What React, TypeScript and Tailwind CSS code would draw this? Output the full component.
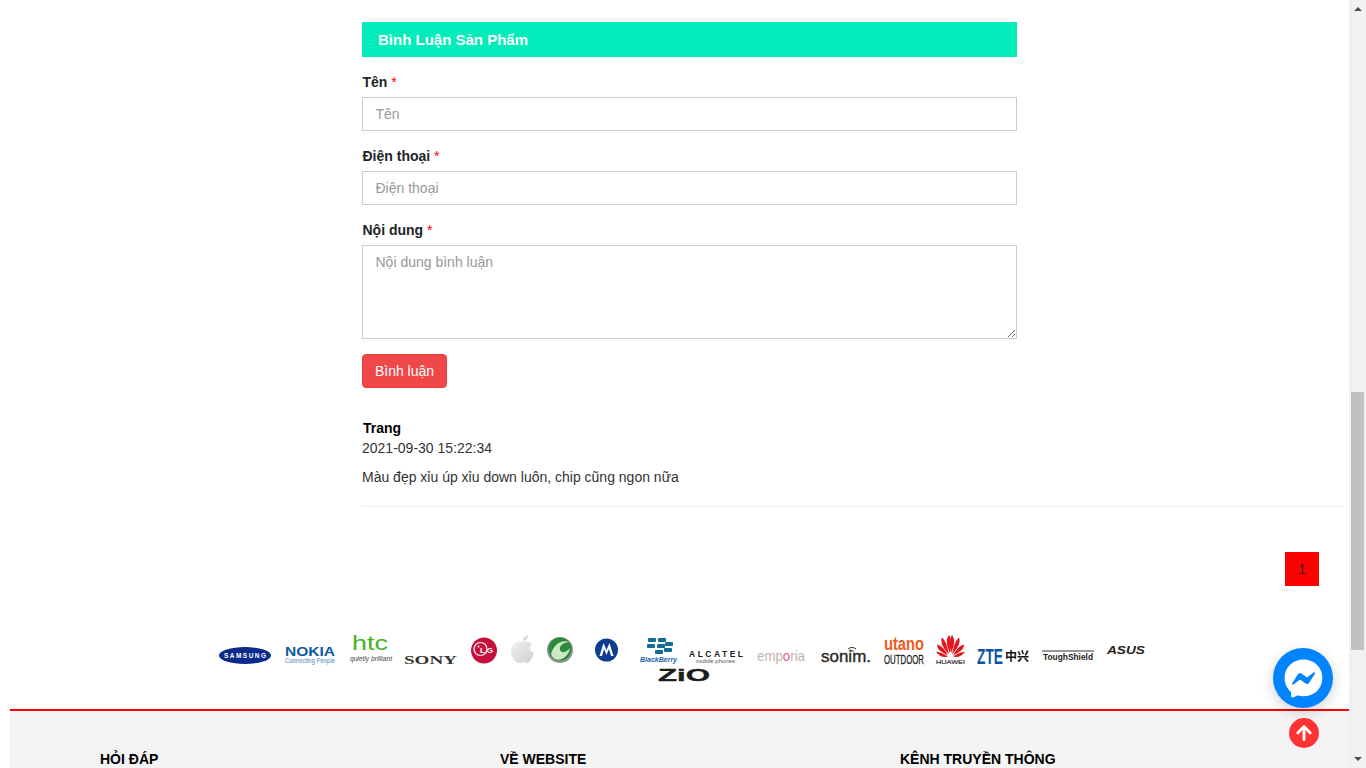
import React from "react";
import { FaArrowUp, FaFacebookMessenger } from "react-icons/fa";

const sans = { fontFamily: '"Liberation Sans", Arial, sans-serif' };

function Logo({ w, ml = 13, children }: { w: number; ml?: number; children: React.ReactNode }) {
  return (
    <svg width={w} height={36} viewBox={`0 0 ${w} 36`} style={{ marginLeft: ml, ...sans }} className="shrink-0 block overflow-visible">
      {children}
    </svg>
  );
}

function Logos() {
  return (
    <div className="pl-[219px] w-[1349px] h-[54px] flex flex-col">
      <div className="flex h-[36px]">
        <Logo w={52} ml={0}>
          <ellipse cx="26" cy="23.5" rx="26" ry="8.5" fill="#0a2a8c" />
          <text x="26" y="26" fontSize="6.5" fontWeight="700" fill="#fff" textAnchor="middle" textLength="42">SAMSUNG</text>
        </Logo>
        <Logo w={50} ml={14}>
          <text x="0" y="24" fontSize="12.5" fontWeight="700" fill="#0d5a9c" textLength="50" lengthAdjust="spacingAndGlyphs">NOKIA</text>
          <text x="0" y="30.500" fontSize="8" fill="#4a86c0" textLength="50" lengthAdjust="spacingAndGlyphs">Connecting People</text>
        </Logo>
        <Logo w={42} ml={15}>
          <text x="2" y="18" fontSize="21" fill="#43b51e" textLength="36" lengthAdjust="spacingAndGlyphs">htc</text>
          <text x="0" y="28.500" fontSize="8" fontStyle="italic" fill="#444" textLength="42" lengthAdjust="spacingAndGlyphs">quietly brilliant</text>
        </Logo>
        <Logo w={53} ml={12}>
          <text x="0" y="32" fontSize="13" fontWeight="700" fill="#333" textLength="53" lengthAdjust="spacingAndGlyphs" style={{ fontFamily: '"Liberation Serif", serif' }}>SONY</text>
        </Logo>
        <Logo w={26} ml={14}>
          <circle cx="13" cy="18.500" r="13" fill="#c8103e" />
          <circle cx="9.5" cy="17" r="6.5" fill="none" stroke="#fff" strokeWidth="1.2" />
          <circle cx="7.5" cy="14.500" r="0.9" fill="#fff" />
          <text x="9" y="21" fontSize="8" fontWeight="700" fill="#fff" textLength="13">LG</text>
        </Logo>
        <Logo w={23} ml={14}>
          <defs>
            <linearGradient id="apple" x1="0" y1="0" x2="1" y2="1">
              <stop offset="0" stopColor="#f0f0f0" />
              <stop offset="1" stopColor="#cfcfcf" />
            </linearGradient>
          </defs>
          <path d="M13 10C15 9 18 9 21 12C18 14 18 19 23 21C21 27 18 32 15 31C13 30 11 30 9 31C5 32 0 25 0 19C0 12 7 8 13 10Z" fill="url(#apple)" />
          <path d="M12 9C12 6 14 4 17 3C17 6 15 9 12 9Z" fill="#d5d5d5" />
        </Logo>
        <Logo w={26} ml={13}>
          <circle cx="13" cy="18" r="13" fill="#8f9692" />
          <circle cx="13" cy="17" r="11.5" fill="#2e8b3a" />
          <path d="M4 22C7 12 14 7 23 10C16 10 12 14 13 18C15 22 20 20 23 16C22 24 14 30 8 27C6 26 5 24 4 22Z" fill="#cfe8c4" />
        </Logo>
        <Logo w={23} ml={22}>
          <circle cx="11.5" cy="18" r="11.5" fill="#0f3d92" />
          <path d="M4.500 24L8.500 11L11.500 18L14.500 11L18.500 24H16L14 17L11.500 23L9 17L7 24Z" fill="#fff" />
        </Logo>
        <Logo w={37} ml={22}>
          <g fill="#0f6d96">
            <rect x="8" y="6" width="8" height="4" rx="1" /><rect x="18" y="6" width="8" height="4" rx="1" />
            <rect x="7" y="12" width="8" height="4" rx="1" /><rect x="17" y="12" width="8" height="4" rx="1" /><rect x="25" y="10" width="8" height="4" rx="1" />
            <rect x="15" y="18" width="8" height="4" rx="1" /><rect x="24" y="16" width="8" height="4" rx="1" />
          </g>
          <text x="0" y="30" fontSize="7.5" fontStyle="italic" fontWeight="700" fill="#1c5fa8" textLength="37" lengthAdjust="spacingAndGlyphs">BlackBerry</text>
        </Logo>
        <Logo w={54} ml={12}>
          <text x="0" y="24.500" fontSize="8.500" fontWeight="700" fill="#222" textLength="54">ALCATEL</text>
          <text x="7" y="31" fontSize="6" fill="#555" textLength="39" lengthAdjust="spacingAndGlyphs">mobile phones</text>
        </Logo>
        <Logo w={48} ml={14}>
          <text transform="translate(0 29) scale(0.886 1)" fontSize="15" fill="#c0b4ad">emp<tspan fill="#e8589c">o</tspan>ria</text>
        </Logo>
        <Logo w={50} ml={16}>
          <text x="0" y="30" fontSize="17" fill="#2a2a2a" stroke="#2a2a2a" strokeWidth="0.4" textLength="50" lengthAdjust="spacingAndGlyphs">sonim.</text>
          <path d="M27 17a6 6 0 0 1 8 0M29 19.500a3 3 0 0 1 4 0" fill="none" stroke="#333" strokeWidth="1" />
        </Logo>
        <Logo w={40} ml={13}>
          <text transform="translate(0 18) scale(0.668 0.8)" fontSize="22" fontWeight="700" fill="#f25a18">utano</text>
          <text transform="translate(0 32) scale(0.559 0.85)" fontSize="14" fill="#222" stroke="#222" strokeWidth="0.3">OUTDOOR</text>
        </Logo>
        <Logo w={29} ml={12}>
          <g fill="#e2141c" transform="translate(0 -0.6) scale(1 1.2)">
            <path d="M13 3C10 6 10 11 14 18C15 11 16 7 13 3Z" />
            <path d="M16 3C19 6 19 11 15 18C14 11 13 7 16 3Z" />
            <path d="M6 5C4 9 7 14 13 19C11 12 10 8 6 5Z" />
            <path d="M23 5C25 9 22 14 16 19C18 12 19 8 23 5Z" />
            <path d="M1 11C1 15 6 18 12 20C9 15 5 12 1 11Z" />
            <path d="M28 11C28 15 23 18 17 20C20 15 24 12 28 11Z" />
            <path d="M0 17C3 21 8 22 12 21C8 19 4 17 0 17Z" />
            <path d="M29 17C26 21 21 22 17 21C21 19 25 17 29 17Z" />
          </g>
          <text x="0" y="32" fontSize="6" fill="#333" stroke="#333" strokeWidth="0.2" textLength="29" lengthAdjust="spacingAndGlyphs">HUAWEI</text>
        </Logo>
        <Logo w={52} ml={12}>
          <text transform="translate(0 32) scale(0.625 1)" fontSize="22" fontWeight="700" fill="#0b55a5">ZTE</text>
          <text x="28" y="29" fontSize="12" fontWeight="700" fill="#111" style={{ fontFamily: '"Noto Sans CJK SC", sans-serif' }}>中兴</text>
        </Logo>
        <Logo w={52} ml={13}>
          <path d="M0 19H52" stroke="#333" strokeWidth="1" />
          <text x="1" y="28" fontSize="9" fontWeight="700" fill="#222" textLength="50" lengthAdjust="spacingAndGlyphs">ToughShield</text>
        </Logo>
        <Logo w={38} ml={13}>
          <text x="0" y="22" fontSize="10" fontWeight="700" fontStyle="italic" fill="#222" textLength="38" lengthAdjust="spacingAndGlyphs">ASUS</text>
        </Logo>
      </div>
      <div className="flex pl-[439px]">
        <svg width={52} height={16} viewBox="0 0 52 16" className="block shrink-0 overflow-visible" style={sans}>
          <text x="0" y="12.500" fontSize="17" fontWeight="700" fill="#1c1c1c" stroke="#1c1c1c" strokeWidth="0.4" textLength="52" lengthAdjust="spacingAndGlyphs">ZiO</text>
        </svg>
      </div>
    </div>
  );
}

function Label({ text }: { text: string }) {
  return (
    <label className="block text-[14px] leading-[20px] font-bold text-[#212529] pl-[0.5px]">
      {text} <span className="text-[#ff0000] font-normal">*</span>
    </label>
  );
}

export default function App() {
  return (
    <div className="flex w-[1366px] h-[768px] overflow-hidden bg-white" style={sans}>
      <main className="relative w-[1349px] h-[768px] overflow-hidden">
        <div className="ml-[362px] pt-[22px]">
          <section className="w-[655px]">
            <h2 className="h-[35px] bg-[#00edbb] pl-4 text-[15px] leading-[35px] font-bold text-white">Bình Luận Sản Phẩm</h2>
            <div className="mt-[15px]"><Label text="Tên" /></div>
            <input placeholder="Tên" className="mt-[5px] block w-full h-[34px] pl-[12.5px] pr-3 border border-[#ccc] text-[14px] placeholder:text-[#999] outline-none" />
            <div className="mt-[15px]"><Label text="Điện thoại" /></div>
            <input placeholder="Điện thoại" className="mt-[5px] block w-full h-[34px] pl-[12.5px] pr-3 border border-[#ccc] text-[14px] placeholder:text-[#999] outline-none" />
            <div className="mt-[15px]"><Label text="Nội dung" /></div>
            <textarea placeholder="Nội dung bình luận" className="mt-[5px] block w-full h-[94px] pl-[12.5px] pr-3 py-[6px] border border-[#ccc] text-[14px] leading-[20px] placeholder:text-[#999] outline-none" />
            <button className="mt-[15px] block w-[85px] h-[34px] bg-[#f04848] border border-[#ee3a38] rounded-[4px] text-white text-[14px]">Bình luận</button>
          </section>
          <section className="w-[981px] mt-[30px] pb-[19px] border-b border-dotted border-[#ddd] text-[14px] text-[#333]">
            <div className="pl-px font-bold text-black leading-[20px]">Trang</div>
            <div className="leading-[20px]">2021-09-30 15:22:34</div>
            <p className="leading-[20px] mt-[9px]">Màu đẹp xỉu úp xỉu down luôn, chip cũng ngon nữa</p>
          </section>
        </div>
        <div className="flex justify-end pr-[30px] mt-[45px]">
          <span className="w-[34px] h-[34px] bg-[#ff0000] text-[#222] text-[14px] flex items-center justify-center">1</span>
        </div>
        <div className="mt-[46px]"><Logos /></div>
        <footer className="ml-[10px] mt-[23px] h-[60px] bg-[#f4f4f4] border-t-2 border-[#ff0000] pl-[90px] pt-[38px] grid grid-cols-[400px_400px_1fr] text-[14px] leading-[20px] font-bold text-black">
          <div>HỎI ĐÁP</div>
          <div>VỀ WEBSITE</div>
          <div>KÊNH TRUYỀN THÔNG</div>
        </footer>
        <div className="absolute left-[1273px] top-[648px] w-[60px] h-[60px] rounded-full bg-[#0084ff] flex items-center justify-center shadow-[0_4px_14px_rgba(0,0,0,0.18)]">
          <FaFacebookMessenger className="text-white w-[39px] h-[39px]" />
        </div>
        <div className="absolute left-[1289px] top-[718px] w-[30px] h-[30px] rounded-full bg-[#ff3333] flex items-center justify-center">
          <FaArrowUp className="text-white w-[18px] h-[18px]" />
        </div>
      </main>
      <aside className="relative w-[17px] h-[768px] bg-[#f1f1f1]">
        <div className="absolute left-[5px] top-[7px] w-0 h-0 border-x-[4px] border-x-transparent border-b-[4px] border-b-[#505050]" />
        <div className="absolute left-[2px] top-[392px] w-[13px] h-[258px] bg-[#c1c1c1]" />
        <div className="absolute left-[5px] bottom-[7px] w-0 h-0 border-x-[4px] border-x-transparent border-t-[4px] border-t-[#505050]" />
      </aside>
    </div>
  );
}
